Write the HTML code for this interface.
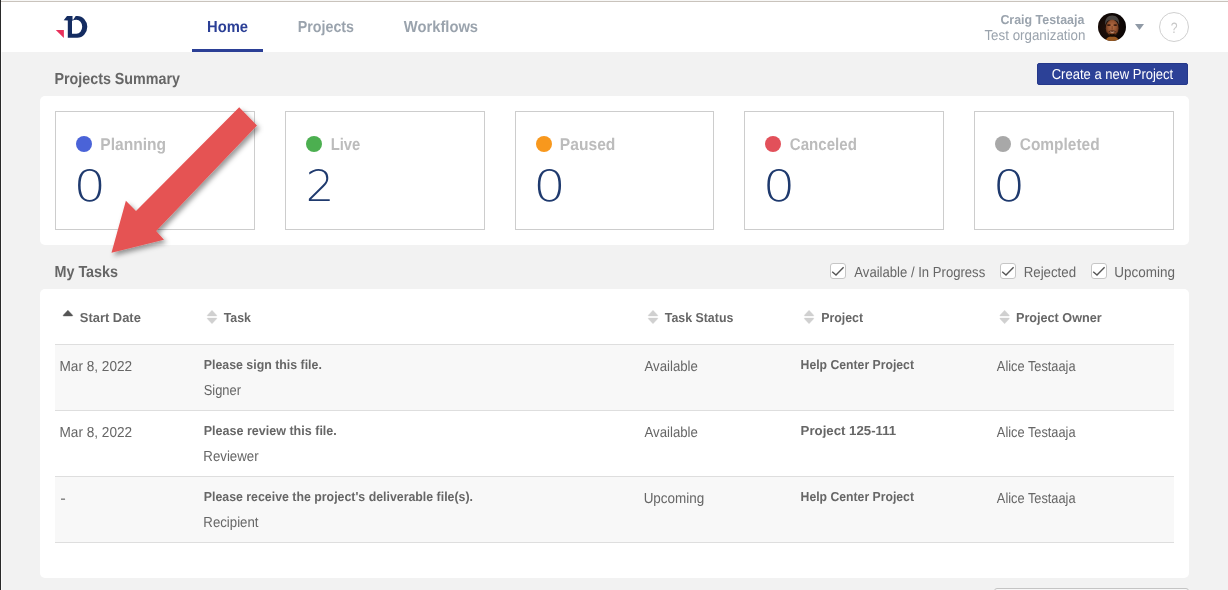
<!DOCTYPE html>
<html lang="en">
<head>
<meta charset="utf-8">
<title>Home</title>
<style>
*{box-sizing:border-box;margin:0;padding:0}
html,body{width:1228px;height:590px;overflow:hidden;background:#f2f2f2;font-family:"Liberation Sans",sans-serif;color:#666}
.a{position:absolute}
.t{position:absolute;white-space:nowrap;transform-origin:0 0;line-height:1;display:block;text-rendering:geometricPrecision}
#edgeT0{left:0;top:0;width:1228px;height:1px;background:#f7f7f6}
#edgeT1{left:0;top:1px;width:1228px;height:1px;background:#c9c3bc}
#edgeL{left:0;top:0;width:1px;height:590px;background:#2a2a2a}
#edgeL2{left:1px;top:52px;width:1px;height:538px;background:#fafafa}
#hdr{left:1px;top:2px;width:1227px;height:50px;background:#fff}
#ul{left:192px;top:49px;width:71px;height:3px;background:#2b3f96}
.panel{background:#fff;border-radius:5px}
#p1{left:40px;top:96px;width:1149px;height:149px}
#p2{left:40px;top:289px;width:1149px;height:289px}
.card{position:absolute;top:111px;height:119px;border:1px solid #cdcdcd;background:#fff}
.dot{position:absolute;width:16px;height:16px;border-radius:50%;top:136px}
#btn{left:1037px;top:63px;width:151px;height:22px;background:#2c4197;border:1px solid #25388a;border-radius:2px}
.cb{position:absolute;top:263px;width:16px;height:16px;border:1px solid #c6c6c6;border-radius:3px;background:#fff}
.cb svg{position:absolute;left:-1px;top:-1px}
.row{position:absolute;left:55px;width:1119px;height:66px;border-top:1px solid #dedede}
.g{background:#f8f8f8}
#help{left:1159px;top:12px;width:30px;height:30px;border:1px solid #d0d0d0;border-radius:50%;background:#fff}
#tx{left:0;top:0;width:1228px;height:590px;will-change:transform}
#bot{left:994px;top:588px;width:195px;height:10px;border:1px solid #c4c4c4;border-radius:3px;background:#f7f7f7}
</style>
</head>
<body>
<div class="a" id="hdr"></div>
<div class="a" id="edgeT0"></div>
<div class="a" id="edgeT1"></div>
<div class="a" id="edgeL2"></div>
<div class="a" id="edgeL"></div>
<div class="a" id="ul"></div>

<!-- logo -->
<svg class="a" style="left:54px;top:14px" width="36" height="26" viewBox="54 14 36 26">
  <polygon points="55.8,30 63.9,30 63.9,37.9" fill="#e8315b"/>
  <path fill="#142c61" fill-rule="evenodd" d="M67,16 L72.5,16 L72.5,19.2 L73,20 L75.7,16 L77.3,16 A10,10.85 0 0 1 77.3,37.7 L67.8,37.7 L67.8,20.4 L63.7,20.3 Z M72,20.8 C73.4,20 74.9,19.7 76.4,19.7 A5.8,7 0 0 1 76.4,33.7 L72,33.7 Z"/>
</svg>

<!-- avatar -->
<svg class="a" style="left:1097px;top:12px" width="30" height="30" viewBox="0 0 30 30">
  <defs>
    <clipPath id="avc"><circle cx="15" cy="15" r="14"/></clipPath>
    <radialGradient id="face" cx="50%" cy="42%" r="62%"><stop offset="0" stop-color="#b56e45"/><stop offset="0.55" stop-color="#93522f"/><stop offset="1" stop-color="#4a2514"/></radialGradient>
    <radialGradient id="avbg" cx="35%" cy="55%" r="70%"><stop offset="0" stop-color="#24120b"/><stop offset="1" stop-color="#070303"/></radialGradient>
    <filter id="avb" x="-20%" y="-20%" width="140%" height="140%"><feGaussianBlur stdDeviation="0.55"/></filter>
  </defs>
  <circle cx="15" cy="15" r="14" fill="url(#avbg)"/>
  <g clip-path="url(#avc)" filter="url(#avb)">
    <path d="M8.2,13 C7.6,6.5 11,3.4 15.2,3.4 C19.4,3.4 22.8,6.5 22.2,13 L20.5,9.5 C18,7.6 12.4,7.6 9.9,9.5 Z" fill="#4a4543"/>
    <path d="M8,30 C9,25.6 12,24.6 15.2,24.6 C18.4,24.6 21.4,25.6 22.4,30 Z" fill="#9a5a20"/>
    <ellipse cx="15.2" cy="16.2" rx="6.4" ry="8.6" fill="url(#face)"/>
    <path d="M9.6,19.5 C10.2,26.2 20.2,26.2 20.8,19.5 C19.6,22.6 17.6,23 15.2,23 C12.8,23 10.8,22.6 9.6,19.5 Z" fill="#180b06"/>
    <ellipse cx="11.9" cy="13.1" rx="1.9" ry="0.9" fill="#2a130a" opacity="0.9"/>
    <ellipse cx="18.3" cy="13.1" rx="1.9" ry="0.9" fill="#2a130a" opacity="0.9"/>
    <path d="M11.6,19.2 C13,18.2 17.4,18.2 18.8,19.2 L18.2,19.9 C16.8,19.3 13.6,19.3 12.2,19.9 Z" fill="#2a130a" opacity="0.8"/>
    <rect x="14.4" y="14" width="1.6" height="3.6" fill="#7a3f22" opacity="0.6"/>
    <path d="M12.6,19.6 C13.8,20.9 16.6,20.9 17.8,19.6 C16.6,20.1 13.8,20.1 12.6,19.6 Z" fill="#eadbd2"/>
    <path d="M12.4,21.6 C14,22.6 16.4,22.6 18,21.6 L17.4,23.6 L13,23.6 Z" fill="#1a0c06"/>
  </g>
</svg>
<svg class="a" style="left:1134px;top:23px" width="12" height="9" viewBox="1134 23 12 9"><polygon points="1135,24 1144,24 1139.5,30" fill="#909aa6"/></svg>
<div class="a" id="help"></div>

<div class="a" id="btn"></div>

<div class="a panel" id="p1"></div>
<div class="card" style="left:55px;width:200px"></div>
<div class="card" style="left:285px;width:200px"></div>
<div class="card" style="left:515px;width:199px"></div>
<div class="card" style="left:744px;width:200px"></div>
<div class="card" style="left:974px;width:200px"></div>
<div class="dot" style="left:76px;background:#4a63d8"></div>
<div class="dot" style="left:306px;background:#4caf50"></div>
<div class="dot" style="left:536px;background:#f8981d"></div>
<div class="dot" style="left:765px;background:#e2505a"></div>
<div class="dot" style="left:995px;background:#a8a8a8"></div>

<!-- checkboxes -->
<div class="cb" style="left:830px"><svg width="16" height="16" viewBox="0 0 16 16"><polyline points="2.2,8.8 6,12 13.6,4.3" fill="none" stroke="#555" stroke-width="1.4"/></svg></div>
<div class="cb" style="left:1000px"><svg width="16" height="16" viewBox="0 0 16 16"><polyline points="2.2,8.8 6,12 13.6,4.3" fill="none" stroke="#555" stroke-width="1.4"/></svg></div>
<div class="cb" style="left:1091px"><svg width="16" height="16" viewBox="0 0 16 16"><polyline points="2.2,8.8 6,12 13.6,4.3" fill="none" stroke="#555" stroke-width="1.4"/></svg></div>

<div class="a panel" id="p2"></div>
<div class="row g" style="top:344px"></div>
<div class="row" style="top:410px"></div>
<div class="row g" style="top:476px"></div>
<div class="row" style="top:542px;height:1px"></div>

<!-- sort icons -->
<svg class="a" style="left:0;top:300px" width="1228" height="30" viewBox="0 300 1228 30">
  <g transform="translate(62.7,310)"><path d="M5.2,0.2 L9.9,5.2 Q10.2,6 9.4,6 L1,6 Q0.2,6 0.5,5.2 Z" fill="#555" stroke="#555" stroke-width="0.4" stroke-linejoin="round"/></g>
  <g fill="#d0d0d0" stroke="#d0d0d0" stroke-width="0.3" stroke-linejoin="round">
    <g transform="translate(206.8,310)"><path d="M5.2,0.2 L9.9,5.2 Q10.2,6 9.4,6 L1,6 Q0.2,6 0.5,5.2 Z"/><path d="M5.2,13.8 L9.9,8.8 Q10.2,8 9.4,8 L1,8 Q0.2,8 0.5,8.8 Z"/></g>
    <g transform="translate(647.8,310)"><path d="M5.2,0.2 L9.9,5.2 Q10.2,6 9.4,6 L1,6 Q0.2,6 0.5,5.2 Z"/><path d="M5.2,13.8 L9.9,8.8 Q10.2,8 9.4,8 L1,8 Q0.2,8 0.5,8.8 Z"/></g>
    <g transform="translate(803.85,310)"><path d="M5.2,0.2 L9.9,5.2 Q10.2,6 9.4,6 L1,6 Q0.2,6 0.5,5.2 Z"/><path d="M5.2,13.8 L9.9,8.8 Q10.2,8 9.4,8 L1,8 Q0.2,8 0.5,8.8 Z"/></g>
    <g transform="translate(999.4,310)"><path d="M5.2,0.2 L9.9,5.2 Q10.2,6 9.4,6 L1,6 Q0.2,6 0.5,5.2 Z"/><path d="M5.2,13.8 L9.9,8.8 Q10.2,8 9.4,8 L1,8 Q0.2,8 0.5,8.8 Z"/></g>
  </g>
</svg>

<div class="a" id="bot"></div>

<div class="a" id="tx">
<span class="t" style="left:206px;top:20px;font-size:16px;font-weight:bold;color:#2b3f96;transform:translateX(1.00px) scaleX(0.9233);">Home</span>
<span class="t" style="left:297px;top:20px;font-size:16px;font-weight:bold;color:#9aa3ad;transform:translateX(0.82px) scaleX(0.8894);">Projects</span>
<span class="t" style="left:403px;top:20px;font-size:16px;font-weight:bold;color:#9aa3ad;transform:translateX(0.85px) scaleX(0.9202);">Workflows</span>
<span class="t" style="left:1000px;top:13px;font-size:13px;font-weight:bold;color:#9aa3ad;transform:translateX(0.40px) scaleX(0.9554);">Craig Testaaja</span>
<span class="t" style="left:984px;top:29px;font-size:14.5px;color:#9aa3ad;transform:translateX(0.45px) scaleX(0.9202);">Test organization</span>
<span class="t" style="left:1170px;top:21px;font-size:15px;color:#c8c8c8;transform:translateX(0.80px) scaleX(0.8150);">?</span>
<span class="t" style="left:54px;top:72px;font-size:16px;font-weight:bold;color:#666;transform:translateX(0.46px) scaleX(0.8932);">Projects Summary</span>
<span class="t" style="left:1051px;top:68px;font-size:14.5px;color:#fff;transform:translateX(0.70px) scaleX(0.8975);">Create a new Project</span>
<span class="t" style="left:100px;top:136px;font-size:17px;font-weight:bold;color:#bcbcbc;transform:translateX(0.35px) scaleX(0.9165);">Planning</span>
<span class="t" style="left:73px;top:166px;font-size:43px;font-weight:200;font-family:'DejaVu Sans', sans-serif;color:#1f3a6e;transform:translateX(0.44px) scaleX(1.1896);">0</span>
<span class="t" style="left:330px;top:136px;font-size:17px;font-weight:bold;color:#bcbcbc;transform:translateX(0.63px) scaleX(0.8722);">Live</span>
<span class="t" style="left:305px;top:166px;font-size:43px;font-weight:200;font-family:'DejaVu Sans', sans-serif;color:#1f3a6e;transform:translateX(0.65px) scaleX(1.0400);">2</span>
<span class="t" style="left:559px;top:136px;font-size:17px;font-weight:bold;color:#bcbcbc;transform:translateX(0.85px) scaleX(0.9175);">Paused</span>
<span class="t" style="left:533px;top:166px;font-size:43px;font-weight:200;font-family:'DejaVu Sans', sans-serif;color:#1f3a6e;transform:translateX(0.24px) scaleX(1.1896);">0</span>
<span class="t" style="left:789px;top:136px;font-size:17px;font-weight:bold;color:#bcbcbc;transform:translateX(0.85px) scaleX(0.8866);">Canceled</span>
<span class="t" style="left:762px;top:166px;font-size:43px;font-weight:200;font-family:'DejaVu Sans', sans-serif;color:#1f3a6e;transform:translateX(0.84px) scaleX(1.1896);">0</span>
<span class="t" style="left:1019px;top:136px;font-size:17px;font-weight:bold;color:#bcbcbc;transform:translateX(0.75px) scaleX(0.9099);">Completed</span>
<span class="t" style="left:992px;top:166px;font-size:43px;font-weight:200;font-family:'DejaVu Sans', sans-serif;color:#1f3a6e;transform:translateX(0.64px) scaleX(1.1896);">0</span>
<span class="t" style="left:54px;top:265px;font-size:16px;font-weight:bold;color:#666;transform:translateX(0.46px) scaleX(0.8979);">My Tasks</span>
<span class="t" style="left:854px;top:266px;font-size:14.5px;color:#666;transform:translateX(0.35px) scaleX(0.9038);">Available / In Progress</span>
<span class="t" style="left:1023px;top:266px;font-size:14.5px;color:#666;transform:translateX(0.65px) scaleX(0.9164);">Rejected</span>
<span class="t" style="left:1114px;top:266px;font-size:14.5px;color:#666;transform:translateX(0.28px) scaleX(0.9291);">Upcoming</span>
<span class="t" style="left:79px;top:311px;font-size:13px;font-weight:bold;color:#666;transform:translateX(0.80px) scaleX(0.9940);">Start Date</span>
<span class="t" style="left:223px;top:311px;font-size:13px;font-weight:bold;color:#666;transform:translateX(0.75px) scaleX(0.9493);">Task</span>
<span class="t" style="left:664px;top:311px;font-size:13px;font-weight:bold;color:#666;transform:translateX(0.75px) scaleX(0.9523);">Task Status</span>
<span class="t" style="left:821px;top:311px;font-size:13px;font-weight:bold;color:#666;transform:translateX(0.15px) scaleX(0.9511);">Project</span>
<span class="t" style="left:1015px;top:311px;font-size:13px;font-weight:bold;color:#666;transform:translateX(0.95px) scaleX(0.9726);">Project Owner</span>
<span class="t" style="left:59px;top:360px;font-size:14.5px;color:#666;transform:translateX(0.47px) scaleX(0.9396);">Mar 8, 2022</span>
<span class="t" style="left:203px;top:358px;font-size:13px;font-weight:bold;color:#666;transform:translateX(0.75px) scaleX(0.9503);">Please sign this file.</span>
<span class="t" style="left:203px;top:384px;font-size:14.5px;color:#666;transform:translateX(0.75px) scaleX(0.8884);">Signer</span>
<span class="t" style="left:644px;top:360px;font-size:14.5px;color:#666;transform:translateX(0.55px) scaleX(0.9102);">Available</span>
<span class="t" style="left:800px;top:358px;font-size:13px;font-weight:bold;color:#666;transform:translateX(0.60px) scaleX(0.9395);">Help Center Project</span>
<span class="t" style="left:996px;top:360px;font-size:14.5px;color:#666;transform:translateX(0.85px) scaleX(0.8819);">Alice Testaaja</span>
<span class="t" style="left:59px;top:426px;font-size:14.5px;color:#666;transform:translateX(0.47px) scaleX(0.9396);">Mar 8, 2022</span>
<span class="t" style="left:203px;top:424px;font-size:13px;font-weight:bold;color:#666;transform:translateX(0.75px) scaleX(0.9640);">Please review this file.</span>
<span class="t" style="left:203px;top:450px;font-size:14.5px;color:#666;transform:translateX(0.35px) scaleX(0.9136);">Reviewer</span>
<span class="t" style="left:644px;top:426px;font-size:14.5px;color:#666;transform:translateX(0.55px) scaleX(0.9102);">Available</span>
<span class="t" style="left:800px;top:424px;font-size:13px;font-weight:bold;color:#666;transform:translateX(0.60px) scaleX(1.0174);">Project 125-111</span>
<span class="t" style="left:996px;top:426px;font-size:14.5px;color:#666;transform:translateX(0.85px) scaleX(0.8819);">Alice Testaaja</span>
<span class="t" style="left:60px;top:492px;font-size:14.5px;color:#666;transform:translateX(0.25px) scaleX(1.1504);">-</span>
<span class="t" style="left:203px;top:490px;font-size:13px;font-weight:bold;color:#666;transform:translateX(0.75px) scaleX(0.9497);">Please receive the project's deliverable file(s).</span>
<span class="t" style="left:203px;top:516px;font-size:14.5px;color:#666;transform:translateX(0.34px) scaleX(0.9122);">Recipient</span>
<span class="t" style="left:643px;top:492px;font-size:14.5px;color:#666;transform:translateX(0.64px) scaleX(0.9284);">Upcoming</span>
<span class="t" style="left:800px;top:490px;font-size:13px;font-weight:bold;color:#666;transform:translateX(0.60px) scaleX(0.9395);">Help Center Project</span>
<span class="t" style="left:996px;top:492px;font-size:14.5px;color:#666;transform:translateX(0.85px) scaleX(0.8819);">Alice Testaaja</span>
</div>

<!-- arrow -->
<svg class="a" style="left:90px;top:90px" width="200" height="190" viewBox="90 90 200 190">
  <defs><filter id="sh" x="-20%" y="-20%" width="150%" height="150%"><feDropShadow dx="2.5" dy="3" stdDeviation="2.5" flood-color="#000" flood-opacity="0.4"/></filter></defs>
  <polygon filter="url(#sh)" fill="#e55353" points="239.2,107.2 257,125.4 156.2,231.1 164,239.7 111.5,252.7 125.9,200.8 136,210.9"/>
</svg>
</body>
</html>
